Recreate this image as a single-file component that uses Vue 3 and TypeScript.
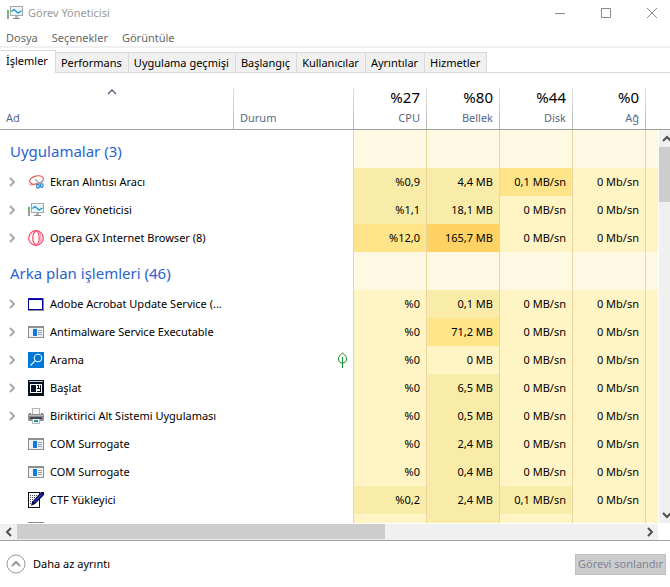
<script setup lang="ts">
import { ref } from 'vue'

type Level = 0 | 1 | 2 | 3
type IconName = 'snip' | 'monitor' | 'opera' | 'window' | 'service' | 'search' | 'start' | 'printer' | 'pen'

interface Cell {
  text: string
  level: Level
}

interface Process {
  name: string
  icon: IconName
  expandable: boolean
  suspended?: boolean
  cells: Cell[]
}

interface Group {
  title: string
  rows: Process[]
}

const c = (text: string, level: Level = 0): Cell => ({ text, level })

const tabs = ['İşlemler', 'Performans', 'Uygulama geçmişi', 'Başlangıç', 'Kullanıcılar', 'Ayrıntılar', 'Hizmetler']
const activeTab = ref(0)

const metrics = [
  { total: '%27', label: 'CPU' },
  { total: '%80', label: 'Bellek' },
  { total: '%44', label: 'Disk' },
  { total: '%0', label: 'Ağ' },
]

const disk = '0 MB/sn'
const net = '0 Mb/sn'

const groups: Group[] = [
  {
    title: 'Uygulamalar (3)',
    rows: [
      { name: 'Ekran Alıntısı Aracı', icon: 'snip', expandable: true, cells: [c('%0,9', 1), c('4,4 MB', 1), c('0,1 MB/sn', 2), c(net)] },
      { name: 'Görev Yöneticisi', icon: 'monitor', expandable: true, cells: [c('%1,1', 1), c('18,1 MB', 1), c(disk), c(net)] },
      { name: 'Opera GX Internet Browser (8)', icon: 'opera', expandable: true, cells: [c('%12,0', 2), c('165,7 MB', 3), c(disk), c(net)] },
    ],
  },
  {
    title: 'Arka plan işlemleri (46)',
    rows: [
      { name: 'Adobe Acrobat Update Service (...', icon: 'window', expandable: true, cells: [c('%0'), c('0,1 MB', 1), c(disk), c(net)] },
      { name: 'Antimalware Service Executable', icon: 'service', expandable: true, cells: [c('%0'), c('71,2 MB', 2), c(disk), c(net)] },
      { name: 'Arama', icon: 'search', expandable: true, suspended: true, cells: [c('%0'), c('0 MB'), c(disk), c(net)] },
      { name: 'Başlat', icon: 'start', expandable: true, cells: [c('%0'), c('6,5 MB', 1), c(disk), c(net)] },
      { name: 'Biriktirici Alt Sistemi Uygulaması', icon: 'printer', expandable: true, cells: [c('%0'), c('0,5 MB', 1), c(disk), c(net)] },
      { name: 'COM Surrogate', icon: 'service', expandable: false, cells: [c('%0'), c('2,4 MB', 1), c(disk), c(net)] },
      { name: 'COM Surrogate', icon: 'service', expandable: false, cells: [c('%0'), c('0,4 MB', 1), c(disk), c(net)] },
      { name: 'CTF Yükleyici', icon: 'pen', expandable: false, cells: [c('%0,2', 1), c('2,4 MB', 1), c('0,1 MB/sn', 1), c(net)] },
      { name: '', icon: 'service', expandable: false, cells: [c(''), c('', 1), c(''), c('')] },
    ],
  },
]
</script>

<template>
  <div class="window">
    <svg class="defs" width="0" height="0" aria-hidden="true">
      <symbol id="i-monitor" viewBox="0 0 16 16">
        <path d="M0 5h2v9H0z" fill="#9a9e9a" />
        <path d="M0 5h2v3H0z" fill="#55c850" />
        <path d="M3 1h13v10H3z" fill="#a2a8ab" />
        <path d="M4 2h11v8H4z" fill="#e8f6fd" />
        <path d="M4.500 6.500L7 4.500l4 3.500 3.500-2" fill="none" stroke="#1688c4" stroke-width="1.200" />
        <path d="M8 11h3v2H8z" fill="#b4b8ba" />
        <path d="M6 13h7v1H6z" fill="#858a8d" />
      </symbol>
      <symbol id="i-snip" viewBox="0 0 16 16">
        <ellipse cx="8.500" cy="6" rx="7" ry="4" fill="#fff" stroke="#e1544e" stroke-width="1.100" transform="rotate(-14 8.500 6)" />
        <path d="M1.500 10.500c2 1 5 0 7-1" fill="none" stroke="#df6b66" />
        <path d="M7 5l5 5M15 6.500l-5 4" stroke="#98a4ad" stroke-width="1.200" />
        <ellipse cx="10" cy="12.200" rx="1.300" ry="1.900" fill="none" stroke="#2485ce" stroke-width="1.300" />
        <ellipse cx="13.700" cy="11.500" rx="1.300" ry="1.900" fill="none" stroke="#2485ce" stroke-width="1.300" />
      </symbol>
      <symbol id="i-opera" viewBox="0 0 16 16">
        <circle cx="8" cy="8" r="7.300" fill="#fff4f6" stroke="#f5486b" stroke-width="1.200" />
        <ellipse cx="8" cy="8" rx="3.200" ry="6.500" fill="#fff" stroke="#f5486b" stroke-width="1.200" />
        <path d="M10 1.500c4 2.500 4 10.500 0 13" fill="none" stroke="#f78ba2" />
      </symbol>
      <symbol id="i-window" viewBox="0 0 16 16">
        <path d="M0 2h16v13H0z" fill="#888d99" />
        <path d="M0 2h15v12H0z" fill="#00008c" />
        <path d="M1 4h13v9H1z" fill="#fff" />
        <path d="M0 2h15v1H0z" fill="#1515d0" />
      </symbol>
      <symbol id="i-service" viewBox="0 0 16 16">
        <path d="M0 2h16v12H0z" fill="#8b9094" />
        <path d="M1 4h14v9H1z" fill="#f1f2f3" />
        <path d="M5 5h4v7H5z" fill="#0a7be0" />
        <path d="M10 6h4v1h-4zM10 8h4v1h-4zM10 10h4v1h-4z" fill="#999da0" />
      </symbol>
      <symbol id="i-search" viewBox="0 0 16 16">
        <path d="M0 0h16v16H0z" fill="#0078d7" />
        <circle cx="10" cy="6" r="3.700" fill="none" stroke="#e8f5ff" stroke-width="1.100" />
        <path d="M7.300 8.700L2.500 13.500" stroke="#e8f5ff" stroke-width="1.200" />
      </symbol>
      <symbol id="i-start" viewBox="0 0 16 16">
        <path d="M0 0h16v16H0z" fill="#03101e" />
        <path d="M1 1h14v1H1z" fill="#c8ced4" />
        <path d="M2 4h12v9H2z" fill="#fff" />
        <path d="M3 5h5v7H3z" fill="#03101e" />
        <path d="M9 5h4v7H9z" fill="#03101e" />
        <path d="M9 6h1v2H9zM11 5h1v3h-1zM9 9h3v2H9z" fill="#fff" />
      </symbol>
      <symbol id="i-printer" viewBox="0 0 16 16">
        <path d="M4 0h8v6H4z" fill="#b2b5b8" />
        <path d="M5 1h6v5H5z" fill="#f5f6f6" />
        <path d="M1 5h2v1h10V5h2l1 2v5l-1 1H1l-1-1V7z" fill="#8b8f93" />
        <path d="M1 7h14v1H1z" fill="#b5b9bb" />
        <path d="M2 9h12v2H2z" fill="#44494d" />
        <path d="M4 11h8v5H4z" fill="#b8bcbe" />
        <path d="M5 11h6v4H5z" fill="#e6f3f7" />
        <path d="M6 12h2v2H6z" fill="#36a853" />
        <path d="M8 12h2v2H8z" fill="#2476d0" />
      </symbol>
      <symbol id="i-pen" viewBox="0 0 16 16">
        <path d="M0 0h12v16H0z" fill="#101010" />
        <path d="M1 1h10v14H1z" fill="#fff" />
        <path d="M2 3.500h8M2 5.500h7M2 7.500h6M2 9.500h4M2 11.500h2" stroke="#444" stroke-dasharray="1 1" />
        <path d="M13 0h3v3L7 12l-4 2 1-4z" fill="#06083c" />
        <path d="M6 10l8-8" stroke="#2b39d8" stroke-width="1.500" />
      </symbol>
    </svg>

    <header class="titlebar">
      <svg class="icon" aria-hidden="true"><use href="#i-monitor" /></svg>
      <h1 class="title">Görev Yöneticisi</h1>
      <div class="controls">
        <button type="button" aria-label="Simge durumuna küçült">
          <svg width="12" height="12" viewBox="0 0 12 12"><path d="M1 6.500h10" /></svg>
        </button>
        <button type="button" aria-label="Ekranı kapla">
          <svg width="12" height="12" viewBox="0 0 12 12"><path d="M1.500 1.500h9v9h-9z" /></svg>
        </button>
        <button type="button" aria-label="Kapat">
          <svg width="12" height="12" viewBox="0 0 12 12"><path d="M1 1l10 10M11 1L1 11" /></svg>
        </button>
      </div>
    </header>

    <nav class="menu">
      <button type="button">Dosya</button>
      <button type="button">Seçenekler</button>
      <button type="button">Görüntüle</button>
    </nav>

    <div class="tabs" role="tablist">
      <button
        v-for="(tab, i) in tabs"
        :key="tab"
        type="button"
        role="tab"
        class="tab"
        :class="{ active: i === activeTab }"
        :aria-selected="i === activeTab"
        @click="activeTab = i"
      >{{ tab }}</button>
    </div>

    <main class="content">
      <div class="list">
        <table>
          <colgroup>
            <col />
            <col class="col-status" />
            <col v-for="m in metrics" :key="m.label" class="col-metric" />
            <col class="col-rest" />
          </colgroup>
          <thead>
            <tr>
              <th scope="col" class="th-name">
                <svg class="sort" width="10" height="6" viewBox="0 0 10 6" aria-hidden="true"><path d="M1 5l4-4 4 4" /></svg>
                <span>Ad</span>
              </th>
              <th scope="col" class="sep"><span>Durum</span></th>
              <th v-for="m in metrics" :key="m.label" scope="col" class="sep num">
                <strong>{{ m.total }}</strong>
                <span>{{ m.label }}</span>
              </th>
              <td class="sep"></td>
            </tr>
          </thead>
          <tbody v-for="g in groups" :key="g.title">
            <tr class="group">
              <th scope="rowgroup" colspan="2">{{ g.title }}</th>
              <td v-for="n in 5" :key="n" class="heat"></td>
            </tr>
            <tr v-for="(p, i) in g.rows" :key="i" class="process">
              <td>
                <div class="name">
                  <button v-if="p.expandable" type="button" class="expand" :aria-label="p.name">
                    <svg width="6" height="10" viewBox="0 0 6 10"><path d="M1 1l4 4-4 4" /></svg>
                  </button>
                  <span v-else class="expand"></span>
                  <svg class="icon" aria-hidden="true"><use :href="'#i-' + p.icon" /></svg>
                  <span>{{ p.name }}</span>
                </div>
              </td>
              <td class="status">
                <svg v-if="p.suspended" class="leaf" width="11" height="16" viewBox="0 0 11 16" aria-hidden="true">
                  <path d="M5.500 1C2.500 3 1.500 5 1.500 7c0 3 2 4 4 4s4-1 4-4c0-2-1-4-4-6zM5.500 5v11" />
                </svg>
              </td>
              <td v-for="(cell, k) in p.cells" :key="k" class="heat num" :class="'l' + cell.level">{{ cell.text }}</td>
              <td class="heat l0"></td>
            </tr>
          </tbody>
        </table>
      </div>
      <div class="side">
        <div class="vscroll">
          <button type="button" class="arrow" aria-label="Yukarı kaydır">
            <svg width="10" height="8" viewBox="0 0 10 8"><path d="M1 6l4-4 4 4" /></svg>
          </button>
          <div class="vthumb"></div>
          <button type="button" class="arrow" aria-label="Aşağı kaydır">
            <svg width="10" height="8" viewBox="0 0 10 8"><path d="M1 2l4 4 4-4" /></svg>
          </button>
        </div>
      </div>
    </main>

    <div class="hscroll">
      <button type="button" class="arrow" aria-label="Sola kaydır">
        <svg width="8" height="10" viewBox="0 0 8 10"><path d="M6 1L2 5l4 4" /></svg>
      </button>
      <div class="htrack"><div class="hthumb"></div></div>
      <button type="button" class="arrow" aria-label="Sağa kaydır">
        <svg width="8" height="10" viewBox="0 0 8 10"><path d="M2 1l4 4-4 4" /></svg>
      </button>
    </div>

    <footer class="footer">
      <button type="button" class="details">
        <svg width="20" height="20" viewBox="0 0 20 20" aria-hidden="true">
          <circle cx="10" cy="10" r="9" />
          <path d="M6 12l4-4 4 4" stroke-width="2" />
        </svg>
        <span>Daha az ayrıntı</span>
      </button>
      <button type="button" class="end" disabled>Görevi sonlandır</button>
    </footer>
  </div>
</template>

<style>
body {
  background: #fff;
}
</style>

<style scoped>
.window {
  display: flex;
  flex-direction: column;
  height: 100vh;
  overflow: hidden;
  background: #fff;
  color: #000;
  font-family: "Noto Sans", "Open Sans", sans-serif;
  font-size: 11px;
  line-height: 16px;
}

.defs {
  position: absolute;
}

button {
  margin: 0;
  padding: 0;
  border: 0;
  background: none;
  color: inherit;
  font: inherit;
  white-space: nowrap;
}

svg {
  display: block;
  flex: none;
  fill: none;
}

.icon {
  width: 16px;
  height: 16px;
}

.titlebar {
  display: flex;
  align-items: center;
  height: 26px;
  padding-left: 7px;
}

.title {
  margin: 0 0 0 5px;
  color: #999;
  font-size: 11px;
  font-weight: 400;
}

.controls {
  display: flex;
  margin-left: auto;
}

.controls button {
  display: flex;
  justify-content: center;
  width: 46px;
}

.controls button:last-child {
  width: 41px;
  padding-left: 5px;
  box-sizing: border-box;
}

.controls svg {
  stroke: #888;
}

.menu {
  display: flex;
  gap: 14px;
  height: 20px;
  padding: 0 6px;
  border-bottom: 2px solid #f0f0f0;
  color: #666;
}

.menu button {
  height: 24px;
}

.tabs {
  display: flex;
  align-items: flex-end;
  flex: none;
  height: 22px;
  padding-top: 2px;
  border-bottom: 1px solid #d9d9d9;
}

.tab {
  height: 20px;
  padding: 0 6px 0 5px;
  border: 1px solid #d9d9d9;
  border-width: 1px 1px 0 0;
  background: #f0f0f0;
}

.tab.active {
  height: 23px;
  margin-bottom: -1px;
  padding: 0 7px 3px 6px;
  background: #fff;
}

.content {
  display: flex;
  flex: 1 1 0;
  min-height: 0;
  margin-bottom: 1px;
  overflow: hidden;
}

.list {
  flex: 1;
  min-width: 0;
}

table {
  width: 100%;
  table-layout: fixed;
  border-spacing: 0;
}

.col-status {
  width: 120px;
}

.col-metric {
  width: 73px;
}

.col-rest {
  width: 13px;
}

th,
td {
  padding: 0;
  font-weight: 400;
  text-align: left;
  white-space: nowrap;
}

thead tr {
  height: 57px;
}

thead th,
thead td {
  padding: 0 6px 3px;
  border-bottom: 1px solid #a0a0a0;
  color: #566a86;
  vertical-align: bottom;
}

thead td {
  padding: 0;
}

thead .sep {
  padding-left: 7px;
  background: linear-gradient(#e4e4e4, #b4b4b4) left bottom / 1px 41px no-repeat;
}

thead span,
thead strong {
  display: block;
}

thead strong {
  margin-bottom: 3px;
  color: #000;
  font-size: 15px;
  font-weight: 400;
  line-height: 20px;
}

.th-name .sort {
  margin: 0 auto 15px 101px;
}

.sort {
  stroke: #4c607a;
  stroke-width: 1.3px;
}

.num,
thead .num {
  padding-right: 6px;
  text-align: right;
}

.group {
  height: 38px;
}

.group th {
  padding: 4px 0 0 10px;
  color: #2a63cf;
  font-size: 15px;
  line-height: 20px;
}

.process {
  height: 28px;
}

.name {
  display: flex;
  align-items: center;
  height: 28px;
}

.expand {
  width: 28px;
  padding-left: 9px;
  box-sizing: border-box;
}

.expand svg {
  stroke: #aaa;
  stroke-width: 2px;
}

.name .icon {
  margin-right: 6px;
}

.leaf {
  margin-left: auto;
  margin-right: 5px;
  stroke: #168a2e;
}

.heat {
  border-left: 1px solid #ead6a2;
  background: #fff9e4;
}

.l0 {
  background: #fff4c4;
}

.l1 {
  background: #f9eca8;
}

.l2 {
  background: #ffe48a;
}

.l3 {
  background: #ffd264;
}

.side {
  display: flex;
  flex-direction: column;
  width: 12px;
}

.side::before {
  content: "";
  height: 56px;
  flex: none;
  border-bottom: 1px solid #a0a0a0;
}

.vscroll {
  display: flex;
  flex-direction: column;
  flex: 1;
  margin-left: 1px;
  overflow: hidden;
  background: #f0f0f0;
}

.vscroll .arrow {
  display: flex;
  align-items: center;
  flex: none;
  height: 17px;
  padding-left: 3px;
}

.vscroll .arrow:last-child {
  margin-top: auto;
}

.arrow svg {
  stroke: #505050;
  stroke-width: 2px;
}

.vthumb {
  height: 55px;
  background: #cdcdcd;
}

.hscroll {
  display: flex;
  flex: none;
  height: 16px;
  margin-right: 12px;
  background: #f0f0f0;
}

.hscroll .arrow {
  display: flex;
  align-items: center;
  justify-content: center;
  width: 17px;
}

.htrack {
  flex: 1;
}

.hthumb {
  width: 59%;
  height: 15px;
  background: #cdcdcd;
}

.footer {
  display: flex;
  align-items: center;
  justify-content: space-between;
  flex: none;
  height: 47px;
  padding: 0 4px 0 6px;
  border-top: 1px solid #a0a0a0;
  box-sizing: border-box;
}

.details {
  display: flex;
  align-items: center;
  gap: 7px;
}

.details svg {
  stroke: #999;
}

.end {
  height: 21px;
  padding: 0 2px;
  border: 1px solid #bfbfbf;
  background: #ccc;
  color: #838399;
}
</style>
